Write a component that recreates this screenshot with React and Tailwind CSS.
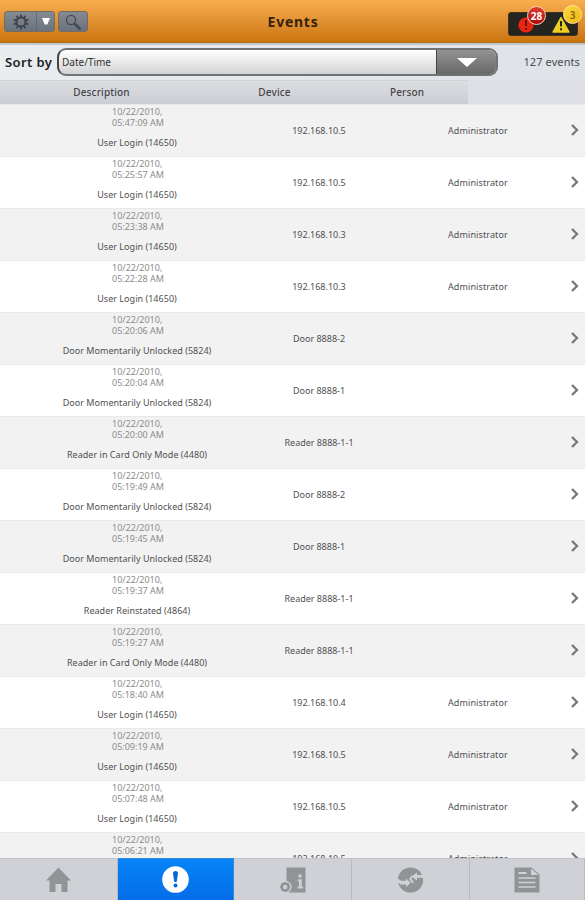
import clsx from 'clsx';

const LOGIN = 'User Login (14650)';
const UNLOCKED = 'Door Momentarily Unlocked (5824)';
const CARD_ONLY = 'Reader in Card Only Mode (4480)';

const EVENTS = [
  { time: '05:47:09 AM', description: LOGIN, device: '192.168.10.5', person: 'Administrator' },
  { time: '05:25:57 AM', description: LOGIN, device: '192.168.10.5', person: 'Administrator' },
  { time: '05:23:38 AM', description: LOGIN, device: '192.168.10.3', person: 'Administrator' },
  { time: '05:22:28 AM', description: LOGIN, device: '192.168.10.3', person: 'Administrator' },
  { time: '05:20:06 AM', description: UNLOCKED, device: 'Door 8888-2' },
  { time: '05:20:04 AM', description: UNLOCKED, device: 'Door 8888-1' },
  { time: '05:20:00 AM', description: CARD_ONLY, device: 'Reader 8888-1-1' },
  { time: '05:19:49 AM', description: UNLOCKED, device: 'Door 8888-2' },
  { time: '05:19:45 AM', description: UNLOCKED, device: 'Door 8888-1' },
  { time: '05:19:37 AM', description: 'Reader Reinstated (4864)', device: 'Reader 8888-1-1' },
  { time: '05:19:27 AM', description: CARD_ONLY, device: 'Reader 8888-1-1' },
  { time: '05:18:40 AM', description: LOGIN, device: '192.168.10.4', person: 'Administrator' },
  { time: '05:09:19 AM', description: LOGIN, device: '192.168.10.5', person: 'Administrator' },
  { time: '05:07:48 AM', description: LOGIN, device: '192.168.10.5', person: 'Administrator' },
  { time: '05:06:21 AM', description: LOGIN, device: '192.168.10.5', person: 'Administrator' },
];

const TOOTH_ANGLES = [0, 36, 72, 108, 144, 180, 216, 252, 288, 324];

function GearIcon() {
  return (
    <svg className="w-4 h-4" viewBox="0 0 16 16" fill="none" stroke="#3d444d">
      <circle cx="8" cy="8" r="4.6" strokeWidth="2.2" />
      {TOOTH_ANGLES.map((a) => (
        <path key={a} d="M8 .2v2.8" strokeWidth="1.7" transform={`rotate(${a} 8 8)`} />
      ))}
    </svg>
  );
}

function SearchIcon() {
  return (
    <svg className="w-4 h-4" viewBox="0 0 16 16" fill="none" stroke="#434a53">
      <circle cx="6" cy="6" r="4.6" strokeWidth="1.3" />
      <path d="M9.3 9.3l1.4 1.4" strokeWidth="1.5" />
      <path d="M10.7 10.7l3.8 3.8" strokeWidth="2.8" strokeLinecap="round" />
    </svg>
  );
}

function HomeIcon() {
  return (
    <svg className="w-[25px] h-[26px]" viewBox="0 0 25 26" fill="#919394">
      <path d="M12.5 0.5L25 13.5H21.5V25H15.5V17H9.5V25H3.5V13.5H0z" />
    </svg>
  );
}

function EventsIcon() {
  return (
    <svg className="w-[27px] h-[27px]" viewBox="0 0 27 27">
      <circle cx="13.5" cy="13.5" r="13.3" fill="#fff" />
      <path d="M11 7.5a2.5 2.5 0 0 1 5 0L14.7 16h-2.4z" fill="#0868d8" />
      <circle cx="13.5" cy="19.6" r="2" fill="#0868d8" />
    </svg>
  );
}

function DeviceInfoIcon() {
  return (
    <svg className="w-[26px] h-[26px]" viewBox="0 0 26 26">
      <path d="M6.5 .5h19v25h-19z" fill="#919394" />
      <circle cx="5.2" cy="20" r="6.4" fill="#d0d0d7" />
      <circle cx="5.2" cy="20" r="3.5" fill="none" stroke="#919394" strokeWidth="2.6" />
      <path
        d="M5.2 15v10M.2 20h10M1.7 16.5l7 7M8.7 16.5l-7 7"
        stroke="#919394"
        strokeWidth="1.5"
        strokeDasharray="1.4 7.2"
      />
      <circle cx="20" cy="9" r="1.8" fill="#d0d0d7" />
      <path d="M17.7 12.2h4v7.3h1.4v2h-5.4v-2h1.3v-5.3h-1.3z" fill="#d0d0d7" />
    </svg>
  );
}

function SyncIcon() {
  return (
    <svg className="w-[27px] h-[26px]" viewBox="0 0 27 26">
      <circle cx="13.5" cy="13" r="12.6" fill="#919394" />
      <path d="M0 12.2h2.5l1.6 1.6h5v-2.4l4.6 4.3-4.6 4.3v-2.6H3.4l-1.4-1.5H0z" fill="#d0d0d7" />
      <path d="M27 10.8h-7v2.6L14.6 9.4 20 5.4V8h7z" fill="#d0d0d7" />
      <path d="M15.4 8.8l-2.2 3.4 3 3.6" fill="none" stroke="#d0d0d7" strokeWidth="1.8" />
    </svg>
  );
}

function ReportIcon() {
  return (
    <svg className="w-[26px] h-[26px]" viewBox="0 0 26 26">
      <path d="M.5.5h17l8 7v18H.5z" fill="#919394" />
      <path d="M17 1.5l7.5 6.5H17z" fill="#d0d0d7" />
      <path d="M4.5 6h8" stroke="#d0d0d7" strokeWidth="2" />
      <path d="M4.5 11h17M4.5 15.5h17M4.5 20h17" stroke="#d0d0d7" strokeWidth="1.5" />
    </svg>
  );
}

const TABS = [
  { id: 'home', Icon: HomeIcon },
  { id: 'events', Icon: EventsIcon },
  { id: 'devices', Icon: DeviceInfoIcon },
  { id: 'sync', Icon: SyncIcon },
  { id: 'reports', Icon: ReportIcon },
];

function TopBar() {
  return (
    <header className="grid grid-cols-[1fr_auto_1fr] h-[43px] shrink-0 border-b border-[#b56c18] bg-linear-to-b from-[#f9ae4d] to-[#ca750b]">
      <div className="flex gap-[3px] pt-[11px] pl-1">
        <div className="flex h-[21px] w-[51px] rounded-[3px] border border-[#756b60] bg-linear-to-b from-[#858b93] to-[#69727d]">
          <button className="flex w-8 items-center justify-center border-r border-[#636a73]"><GearIcon /></button>
          <button className="flex flex-1 items-center justify-center">
            <svg className="w-2 h-[7px]" viewBox="0 0 8 7" fill="#fff"><path d="M0 0h8L5.3 6.5H2.7z" /></svg>
          </button>
        </div>
        <button className="flex h-[21px] w-[30px] items-center justify-center rounded-[3px] border border-[#756b60] bg-linear-to-b from-[#858b93] to-[#69727d]">
          <SearchIcon />
        </button>
      </div>
      <h1 className="pt-[11px] pl-px text-[14px] leading-[21px] font-bold tracking-[0.75px] text-[#33230f]">Events</h1>
      <div className="flex justify-end pt-3 pr-[7px]">
        <div className="relative h-6 w-[70px] rounded-[3px] border border-[#42321c] bg-[#242520]">
          <svg className="absolute top-[4px] left-[9px] w-4 h-4" viewBox="0 0 16 16">
            <circle cx="8" cy="8" r="7.6" fill="#e92510" />
            <path d="M8 3v6M8 11v2" stroke="#5f170f" strokeWidth="2" />
          </svg>
          <svg className="absolute top-[3px] left-[43px] w-[18px] h-[17px]" viewBox="0 0 18 17">
            <path d="M9 1.5L17 16H1z" fill="#edcf22" stroke="#edcf22" strokeWidth="1.4" strokeLinejoin="round" />
            <path d="M9 5v5.5M9 12.2v2" stroke="#28271b" strokeWidth="2" />
          </svg>
          <span className="absolute -top-[7px] left-[18px] flex h-[19px] w-[19px] items-center justify-center rounded-full border border-[#ffd0b4] bg-linear-to-b from-[#de3b33] to-[#aa0508] text-[10px] leading-none font-bold text-white">28</span>
          <span className="absolute -top-[8px] left-[54px] flex h-[19px] w-[19px] items-center justify-center rounded-full border border-[#ffe5a0] bg-linear-to-br from-[#fbd93c] to-[#efb70d] text-[10px] leading-none font-semibold text-[#8d5e12]">3</span>
        </div>
      </div>
    </header>
  );
}

function SortBar() {
  return (
    <div className="flex h-[37px] shrink-0 items-start border-t-2 border-[#c1c8cd] bg-linear-to-r from-[#e9edf0] to-[#dfe2e6] pt-[3px] pl-[5px]">
      <label className="w-[52px] pt-[4px] text-[13px] leading-5 font-semibold tracking-[0.4px] whitespace-nowrap text-[#202226]">Sort by</label>
      <button className="flex h-7 w-[441px] overflow-hidden rounded-[9px] border-2 border-[#717274] border-l-[#444] bg-linear-to-b from-white to-[#d2d3d4] text-left">
        <span className="flex-1 pt-[3px] pl-[3px] text-[10px] leading-[18px] text-[#333]">Date/Time</span>
        <span className="flex w-[60px] items-center justify-center border-l border-[#444] bg-linear-to-b from-[#939393] to-[#686868]">
          <svg className="w-5 h-[9px]" viewBox="0 0 20 9" fill="#fff"><path d="M0 0h20L10 9z" /></svg>
        </span>
      </button>
      <span className="flex-1 pt-[5px] pr-[5px] text-right text-[11px] leading-[18px] tracking-[0.1px] text-[#4b4d51]">127 events</span>
    </div>
  );
}

function TableHeader() {
  return (
    <div className="h-6 shrink-0 bg-[#dfe0e5]">
      <div className="grid h-full w-[468px] grid-cols-[203px_143px_122px] border-t border-[#d0d1d4] bg-linear-to-b from-[#dddee2] to-[#cccdd4] text-center text-[10px] leading-[22px] font-medium tracking-[0.15px] text-[#45464b]">
        <span>Description</span>
        <span>Device</span>
        <span>Person</span>
      </div>
    </div>
  );
}

function EventRow({ event, shaded }) {
  return (
    <div
      className={clsx(
        'grid h-[52px] shrink-0 grid-cols-[274px_90px_84px_123px_14px] border-t border-[#e9e9e9] text-[9px] text-[#505050]',
        shaded ? 'bg-[#f2f2f2]' : 'bg-white'
      )}
    >
      <div className="flex flex-col items-center pt-px">
        <div className="w-[50px] leading-[11px] whitespace-nowrap text-[#8c8c8c]">
          <p>10/22/2010,</p>
          <p>{event.time}</p>
        </div>
        <p className="mt-[9px] leading-[12px] tracking-[0.03px]">{event.description}</p>
      </div>
      <p className="pt-[20px] text-center leading-[12px]">{event.device}</p>
      <p className="col-start-4 pt-[20px] leading-[12px] tracking-[0.1px]">{event.person}</p>
      <svg className="col-start-5 mt-[19px] w-[8px] h-[12px]" viewBox="0 0 8 12" fill="none" stroke="#777" strokeWidth="2.3">
        <path d="M1 1l5 5-5 5" />
      </svg>
    </div>
  );
}

function TabBar() {
  return (
    <nav className="grid h-[42px] shrink-0 grid-cols-[118px_116px_118px_118px_115px] bg-[#d0d0d7]">
      {TABS.map(({ id, Icon }) => (
        <button
          key={id}
          className={clsx(
            'flex items-center justify-center border-t border-r',
            id === 'events'
              ? 'border-[#3389de] bg-linear-to-b from-[#0785f7] to-[#046de8]'
              : 'border-t-[#c3c4cb] border-r-[#b9bac0]'
          )}
        >
          <Icon />
        </button>
      ))}
    </nav>
  );
}

export default function App() {
  return (
    <div className="flex h-[900px] w-[585px] flex-col overflow-hidden bg-white font-['Noto_Sans','Open_Sans',sans-serif]">
      <TopBar />
      <SortBar />
      <TableHeader />
      <main className="flex min-h-0 flex-1 flex-col overflow-hidden">
        {EVENTS.map((event, i) => (
          <EventRow key={event.time} event={event} shaded={i % 2 === 0} />
        ))}
      </main>
      <TabBar />
    </div>
  );
}
